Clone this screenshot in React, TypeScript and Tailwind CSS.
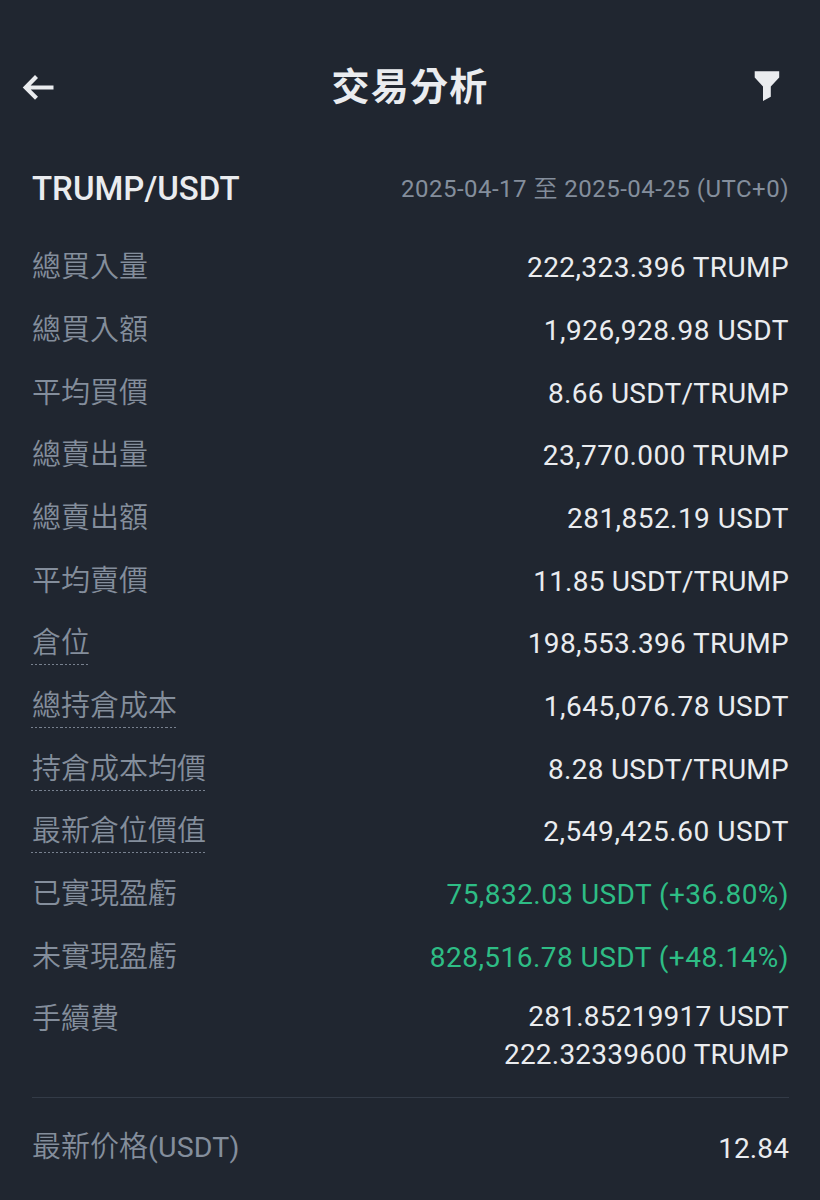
type Row = {
  label: string;
  value: string;
  tracking: string;
  hint?: boolean;
  gain?: boolean;
};

const rows: Row[] = [
  { label: "總買入量", value: "222,323.396 TRUMP", tracking: "tracking-[0.4px]" },
  { label: "總買入額", value: "1,926,928.98 USDT", tracking: "tracking-[0.52px]" },
  { label: "平均買價", value: "8.66 USDT/TRUMP", tracking: "tracking-[0.28px]" },
  { label: "總賣出量", value: "23,770.000 TRUMP", tracking: "tracking-[0.42px]" },
  { label: "總賣出額", value: "281,852.19 USDT", tracking: "tracking-[0.45px]" },
  { label: "平均賣價", value: "11.85 USDT/TRUMP", tracking: "tracking-[0.2px]" },
  { label: "倉位", value: "198,553.396 TRUMP", tracking: "tracking-[0.36px]", hint: true },
  { label: "總持倉成本", value: "1,645,076.78 USDT", tracking: "tracking-[0.52px]", hint: true },
  { label: "持倉成本均價", value: "8.28 USDT/TRUMP", tracking: "tracking-[0.28px]", hint: true },
  { label: "最新倉位價值", value: "2,549,425.60 USDT", tracking: "tracking-[0.55px]", hint: true },
  { label: "已實現盈虧", value: "75,832.03 USDT (+36.80%)", tracking: "tracking-[0.44px]", gain: true },
  { label: "未實現盈虧", value: "828,516.78 USDT (+48.14%)", tracking: "tracking-[0.46px]", gain: true },
];

const fees = ["281.85219917 USDT", "222.32339600 TRUMP"];

function Label({ text, unit, hint }: { text: string; unit?: string; hint?: boolean }) {
  return (
    <span className="relative text-[29px] leading-[38px] font-[350] text-[#848e9c]">
      {text}
      {unit && <span className="text-[28.5px] font-normal tracking-[0.2px]">{unit}</span>}
      {hint && (
        <svg className="absolute -left-px top-[40px] h-[2px] w-full" shapeRendering="crispEdges" aria-hidden="true">
          <line x1="0" y1="0.5" x2="100%" y2="0.5" stroke="#78818f" strokeWidth="1" strokeDasharray="2.2 2" />
        </svg>
      )}
    </span>
  );
}

function Value({ text, tracking, gain }: { text: string; tracking: string; gain?: boolean }) {
  return (
    <span className={`text-[28px] leading-[38px] font-normal ${tracking} ${gain ? "text-[#2ebd85]" : ""}`}>
      {text}
    </span>
  );
}

export default function App() {
  return (
    <div className="flex h-[1200px] w-[820px] flex-col overflow-hidden bg-[#202630] pr-[31px] pl-8 font-[Roboto,'Noto_Sans_CJK_TC',sans-serif] whitespace-nowrap text-[#eaecef]">
      <header className="flex h-[148px] items-center justify-between pt-[26px]">
        <svg className="-ml-[10px] h-8 w-8" viewBox="0 0 32 32" fill="none" stroke="#eaecef" strokeWidth="4.2" aria-hidden="true">
          <path d="M31.500 16.500H4M14.500 5.500L3.700 16.500l10.800 10.800" />
        </svg>
        <h1 className="pl-[12px] text-[38px] leading-[48px] font-bold tracking-[1.2px]">交易分析</h1>
        <svg className="mr-[9px] mb-[3px] h-8 w-[26px]" viewBox="0 0 26 32" fill="#eaecef" aria-hidden="true">
          <path d="M0.700 2.200H25.200V8.500L16.800 17.500V27.700L9 32V17.500L0.700 8.500Z" />
        </svg>
      </header>

      <section className="flex h-[88px] items-center justify-between pb-[6px]">
        <h2 className="text-[33px] leading-[40px] font-medium">TRUMP/USDT</h2>
        <p className="text-[24px] leading-[32px] font-normal tracking-[0.48px] text-[#848e9c]">
          2025-04-17 <span className="font-[350]">至</span> 2025-04-25 (UTC+0)
        </p>
      </section>

      <main>
        {rows.map((row) => (
          <div key={row.label} className="flex h-[62.7px] items-center justify-between">
            <Label text={row.label} hint={row.hint} />
            <span className="flex pt-[2px]">
              <Value text={row.value} tracking={row.tracking} gain={row.gain} />
            </span>
          </div>
        ))}
        <div className="flex h-[109px] items-start justify-between pt-[10px]">
          <span className="flex pt-[2px]">
            <Label text="手續費" />
          </span>
          <div className="flex flex-col items-end">
            {fees.map((fee) => (
              <Value key={fee} text={fee} tracking="tracking-[0.22px]" />
            ))}
          </div>
        </div>
      </main>

      <footer className="flex h-[103px] items-center justify-between border-t border-[#333b47]">
        <span className="flex pb-[3px]">
          <Label text="最新价格" unit="(USDT)" />
        </span>
        <Value text="12.84" tracking="tracking-[0.1px]" />
      </footer>
    </div>
  );
}
